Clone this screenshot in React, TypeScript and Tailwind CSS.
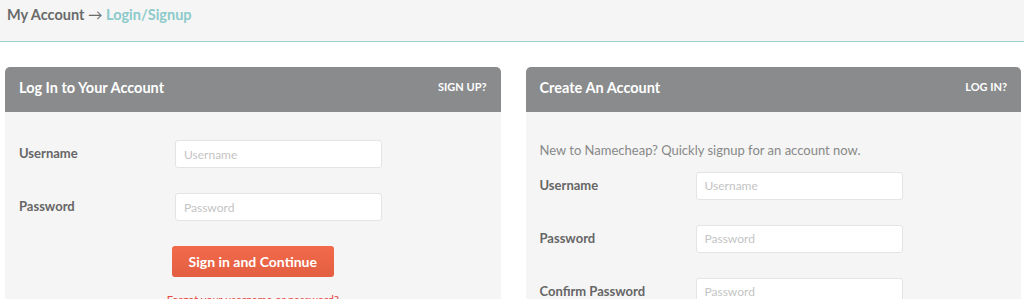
const font = { fontFamily: "Lato, 'Open Sans', sans-serif" };

function Field({ label, placeholder }: { label: string; placeholder: string }) {
  return (
    <div className="flex items-center">
      <label className="w-[156px] text-[13px] font-bold text-[#666]">{label}</label>
      <input
        placeholder={placeholder}
        className="h-[28px] w-[207px] rounded-[3px] border border-[#e4e4e4] bg-white px-[8px] text-[12px] text-[#555] placeholder:text-[#c4c4c4] outline-none"
      />
    </div>
  );
}

function PanelHeader({ title, link }: { title: string; link: string }) {
  return (
    <div className="flex h-[45px] items-center justify-between rounded-t-[5px] bg-[#8a8b8c] px-[14px] pb-[4px]">
      <h2 className="text-[14.5px] font-bold text-white">{title}</h2>
      <a href="#" className="text-[11px] font-bold uppercase text-white">{link}</a>
    </div>
  );
}

export default function App() {
  return (
    <div className="h-[299px] w-[1024px] overflow-hidden bg-white" style={font}>
      <div className="h-[42px] border-b border-[#9fd4cc] bg-[#f5f5f5] px-[7px] pt-[4px]">
        <p className="text-[14.5px] font-bold text-[#6a6a6a]">
          My Account <span className="font-normal">→</span>{" "}
          <a href="#" className="text-[#8ccacb]">Login/Signup</a>
        </p>
      </div>

      <div className="flex gap-[25px] pl-[5px] pr-[3px] pt-[25px]">
        <section className="flex-1">
          <PanelHeader title="Log In to Your Account" link="Sign up?" />
          <div className="h-[200px] bg-[#f5f5f5] px-[14px] pt-[28px]">
            <div className="flex flex-col gap-[25px]">
              <Field label="Username" placeholder="Username" />
              <Field label="Password" placeholder="Password" />
            </div>
            <div className="mt-[25px] flex flex-col items-center">
              <button className="h-[31px] w-[162px] rounded-[3px] bg-gradient-to-b from-[#f26a4a] to-[#e35e42] text-[14px] font-bold text-white">
                Sign in and Continue
              </button>
              <a href="#" className="mt-[15px] text-[11px] text-[#e8453c]">
                Forgot your username or password?
              </a>
            </div>
          </div>
        </section>

        <section className="flex-1">
          <PanelHeader title="Create An Account" link="Log in?" />
          <div className="h-[200px] bg-[#f5f5f5] px-[14px] pt-[29px]">
            <p className="text-[13px] text-[#888]">
              New to Namecheap? Quickly signup for an account now.
            </p>
            <div className="mt-[11px] flex flex-col gap-[25px]">
              <Field label="Username" placeholder="Username" />
              <Field label="Password" placeholder="Password" />
              <Field label="Confirm Password" placeholder="Password" />
            </div>
          </div>
        </section>
      </div>
    </div>
  );
}
